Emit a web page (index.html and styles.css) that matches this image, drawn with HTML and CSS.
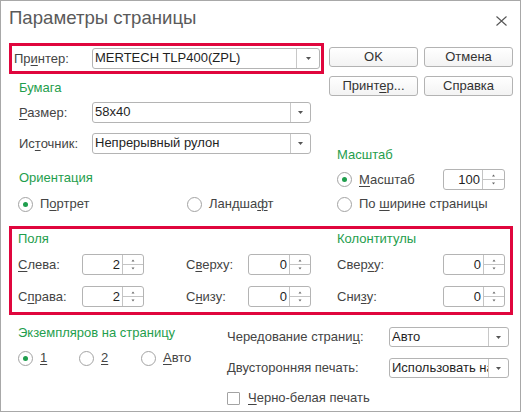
FILE: index.html
```html
<!DOCTYPE html>
<html lang="ru">
<head>
<meta charset="utf-8">
<title>Параметры страницы</title>
<link rel="stylesheet" href="styles.css">
</head>
<body>
<div class="window">
  <div class="titlebar">
    <div class="title">Параметры страницы</div>
    <svg class="close" width="11" height="10" viewBox="0 0 11 10"><path d="M0.5 0.5 L10.5 9.5 M10.5 0.5 L0.5 9.5" stroke="#555" stroke-width="1.1" fill="none"/></svg>
  </div>

  <div class="top">
    <div class="left">
      <div class="hl printer-box">
        <div class="field-row">
          <span class="label w-printer-label">Пр<u>и</u>нтер:</span>
          <div class="combo w-printer"><span class="combo-text">MERTECH TLP400(ZPL)</span><span class="combo-btn"><svg width="5" height="3" viewBox="0 0 5 3"><path d="M0 0h5L2.5 3z" fill="#555"/></svg></span></div>
        </div>
      </div>
      <div class="group-title paper-title">Бумага</div>
      <div class="field-row size-row">
        <span class="label w-field-label"><u>Р</u>азмер:</span>
        <div class="combo w-paper"><span class="combo-text">58x40</span><span class="combo-btn narrow"><svg width="5" height="3" viewBox="0 0 5 3"><path d="M0 0h5L2.5 3z" fill="#555"/></svg></span></div>
      </div>
      <div class="field-row source-row">
        <span class="label w-field-label">Ис<u>т</u>очник:</span>
        <div class="combo w-paper"><span class="combo-text">Непрерывный рулон</span><span class="combo-btn narrow"><svg width="5" height="3" viewBox="0 0 5 3"><path d="M0 0h5L2.5 3z" fill="#555"/></svg></span></div>
      </div>
      <div class="group-title orient-title">Ориентация</div>
      <div class="orient-radios">
        <div class="radio-item"><span class="radio checked"></span><span class="label">П<u>о</u>ртрет</span></div>
        <div class="radio-item"><span class="radio"></span><span class="label">Ландша<u>ф</u>т</span></div>
      </div>
    </div>

    <div class="right">
      <div class="buttons">
        <div class="btn">OK</div>
        <div class="btn">Отмена</div>
        <div class="btn">Принт<u>е</u>р...</div>
        <div class="btn">Справка</div>
      </div>
      <div class="scale-group">
        <div class="group-title">Масштаб</div>
        <div class="scale-row">
          <div class="radio-item"><span class="radio checked"></span><span class="label"><u>М</u>асштаб</span></div>
          <div class="spin w-scale"><span class="spin-text">100</span><span class="spin-btn wide"><svg width="21" height="19" viewBox="0 0 21 19"><path d="M0 9.5H21" stroke="#c4c4c4" stroke-width="1"/><path d="M9 6.5h3L10.5 4.5z" fill="#666"/><path d="M9 12.5h3L10.5 14.5z" fill="#666"/></svg></span></div>
        </div>
        <div class="fit-row">
          <div class="radio-item"><span class="radio"></span><span class="label">По <u>ш</u>ирине страницы</span></div>
        </div>
      </div>
    </div>
  </div>

  <div class="hl margins-box">
    <div class="mgroup">
      <div class="group-title">Поля</div>
      <div class="mrow mrow-left first">
        <span class="label"><u>С</u>лева:</span>
        <div class="spin"><span class="spin-text">2</span><span class="spin-btn"><svg width="20" height="19" viewBox="0 0 20 19"><path d="M0 9.5H20" stroke="#c4c4c4" stroke-width="1"/><path d="M8.5 6.5h3L10 4.5z" fill="#666"/><path d="M8.5 12.5h3L10 14.5z" fill="#666"/></svg></span></div>
        <span></span>
        <span class="label">С<u>в</u>ерху:</span>
        <div class="spin"><span class="spin-text">0</span><span class="spin-btn"><svg width="20" height="19" viewBox="0 0 20 19"><path d="M0 9.5H20" stroke="#c4c4c4" stroke-width="1"/><path d="M8.5 6.5h3L10 4.5z" fill="#666"/><path d="M8.5 12.5h3L10 14.5z" fill="#666"/></svg></span></div>
      </div>
      <div class="mrow mrow-left second">
        <span class="label">С<u>п</u>рава:</span>
        <div class="spin"><span class="spin-text">2</span><span class="spin-btn"><svg width="20" height="19" viewBox="0 0 20 19"><path d="M0 9.5H20" stroke="#c4c4c4" stroke-width="1"/><path d="M8.5 6.5h3L10 4.5z" fill="#666"/><path d="M8.5 12.5h3L10 14.5z" fill="#666"/></svg></span></div>
        <span></span>
        <span class="label">С<u>н</u>изу:</span>
        <div class="spin"><span class="spin-text">0</span><span class="spin-btn"><svg width="20" height="19" viewBox="0 0 20 19"><path d="M0 9.5H20" stroke="#c4c4c4" stroke-width="1"/><path d="M8.5 6.5h3L10 4.5z" fill="#666"/><path d="M8.5 12.5h3L10 14.5z" fill="#666"/></svg></span></div>
      </div>
    </div>
    <div class="mgroup">
      <div class="group-title">Колонтитулы</div>
      <div class="mrow mrow-right first">
        <span class="label">Свер<u>х</u>у:</span>
        <div class="spin"><span class="spin-text">0</span><span class="spin-btn"><svg width="20" height="19" viewBox="0 0 20 19"><path d="M0 9.5H20" stroke="#c4c4c4" stroke-width="1"/><path d="M8.5 6.5h3L10 4.5z" fill="#666"/><path d="M8.5 12.5h3L10 14.5z" fill="#666"/></svg></span></div>
      </div>
      <div class="mrow mrow-right second">
        <span class="label">Сни<u>з</u>у:</span>
        <div class="spin"><span class="spin-text">0</span><span class="spin-btn"><svg width="20" height="19" viewBox="0 0 20 19"><path d="M0 9.5H20" stroke="#c4c4c4" stroke-width="1"/><path d="M8.5 6.5h3L10 4.5z" fill="#666"/><path d="M8.5 12.5h3L10 14.5z" fill="#666"/></svg></span></div>
      </div>
    </div>
  </div>

  <div class="bottom">
    <div class="bleft">
      <div class="group-title copies-title">Экземпляров на страницу</div>
      <div class="copies-radios">
        <div class="radio-item"><span class="radio checked"></span><span class="label"><u>1</u></span></div>
        <div class="radio-item"><span class="radio"></span><span class="label"><u>2</u></span></div>
        <div class="radio-item"><span class="radio"></span><span class="label"><u>А</u>вто</span></div>
      </div>
    </div>
    <div class="bright">
      <div class="field-row alt-row">
        <span class="label w-bottom-label">Чередование страни<u>ц</u>:</span>
        <div class="combo short w-bottom"><span class="combo-text">Авто</span><span class="combo-btn narrow"><svg width="5" height="3" viewBox="0 0 5 3"><path d="M0 0h5L2.5 3z" fill="#555"/></svg></span></div>
      </div>
      <div class="field-row duplex-row">
        <span class="label w-bottom-label">Двусторонняя печать:</span>
        <div class="combo short w-bottom"><span class="combo-text">Использовать настройки принтера</span><span class="combo-btn narrow"><svg width="5" height="3" viewBox="0 0 5 3"><path d="M0 0h5L2.5 3z" fill="#555"/></svg></span></div>
      </div>
      <div class="check-row">
        <span class="checkbox"></span><span class="label"><u>Ч</u>ерно-белая печать</span>
      </div>
    </div>
  </div>
</div>
</body>
</html>
```

FILE: styles.css
```css
html, body {
  margin: 0;
  padding: 0;
  background: #ffffff;
}

body {
  font-family: "Liberation Sans", Arial, sans-serif;
  font-size: 13px;
  color: #444444;
}

u {
  text-decoration: underline;
  text-underline-offset: 2px;
}

.window {
  box-sizing: border-box;
  width: 521px;
  height: 412px;
  border: 1px solid #a8a8a8;
  padding: 0 7px 0 8px;
  background: #ffffff;
}

.titlebar {
  display: flex;
  justify-content: space-between;
  align-items: flex-start;
  height: 42px;
}

.title {
  font-size: 18.6px;
  line-height: 22px;
  color: #5a5a5a;
  margin-top: 6px;
}

.close {
  display: block;
  margin-top: 15px;
  margin-right: 6px;
}

.label {
  line-height: 16px;
  white-space: nowrap;
}

.group-title {
  color: #1f9e4d;
  line-height: 16px;
  white-space: nowrap;
}

/* highlight boxes */
.hl {
  border: 3px solid #e0063d;
}

/* top area */
.top {
  display: grid;
  grid-template-columns: 315px 184px;
  column-gap: 5px;
}

.printer-box {
  padding: 2px 1px 2px 2px;
}

.field-row {
  display: flex;
  align-items: center;
}

.w-printer-label { width: 78px; }
.w-field-label { width: 73px; }
.w-printer { width: 228px; }
.w-paper { width: 219px; }

.combo {
  box-sizing: border-box;
  height: 21px;
  display: flex;
  border: 1px solid #b4b4b4;
  border-radius: 3px;
  background: #ffffff;
  overflow: hidden;
}

.combo.short { height: 20px; }

.combo-text {
  flex: 1;
  min-width: 0;
  padding-left: 2px;
  color: #1f1f1f;
  line-height: 18px;
  white-space: nowrap;
  overflow: hidden;
}

.combo-btn {
  width: 22px;
  flex: none;
  border-left: 1px solid #c8c8c8;
  display: flex;
  align-items: center;
  justify-content: center;
}

.combo-btn.narrow { width: 19px; }

.combo-btn svg { display: block; }

.paper-title {
  margin-top: 6px;
  padding-left: 10px;
}

.size-row {
  margin-top: 6px;
  padding-left: 10px;
}

.source-row {
  margin-top: 10px;
  padding-left: 10px;
}

.orient-title {
  margin-top: 16px;
  padding-left: 10px;
}

.orient-radios {
  margin-top: 10px;
  padding-left: 9px;
  display: grid;
  grid-template-columns: 169px auto;
}

.radio-item {
  display: flex;
  align-items: center;
  height: 16px;
}

.radio {
  box-sizing: border-box;
  width: 15px;
  height: 15px;
  flex: none;
  border: 1px solid #a3a3a3;
  border-radius: 50%;
  background: #ffffff;
  margin-right: 7px;
  display: flex;
  align-items: center;
  justify-content: center;
}

.radio.checked::after {
  content: "";
  width: 5px;
  height: 5px;
  border-radius: 50%;
  background: #1f9e4d;
}

/* right column */
.buttons {
  display: grid;
  grid-template-columns: 89px 89px;
  column-gap: 6px;
  row-gap: 9px;
  margin-top: 4px;
}

.btn {
  box-sizing: border-box;
  height: 20px;
  border: 1px solid #b3b3b3;
  border-radius: 3px;
  background: linear-gradient(#ffffff, #f3f3f3);
  color: #333333;
  text-align: center;
  line-height: 18px;
  white-space: nowrap;
}

.scale-group {
  margin-top: 51px;
  padding-left: 8px;
  padding-right: 8px;
}

.scale-row {
  margin-top: 6px;
  height: 21px;
  display: flex;
  align-items: center;
  justify-content: space-between;
}

.fit-row {
  margin-top: 6px;
}

/* spinners */
.spin {
  box-sizing: border-box;
  height: 21px;
  display: flex;
  border: 1px solid #b4b4b4;
  border-radius: 3px;
  background: #ffffff;
}

.spin-text {
  flex: 1;
  text-align: right;
  padding-right: 2px;
  color: #1f1f1f;
  line-height: 19px;
}

.spin-btn {
  width: 20px;
  flex: none;
  border-left: 1px solid #c4c4c4;
}

.spin-btn.wide { width: 21px; }

.spin-btn svg { display: block; }

.w-scale { width: 62px; }

/* margins box */
.margins-box {
  margin-top: 14px;
  padding: 2px 5px 5px 6px;
  display: grid;
  grid-template-columns: 293px 168px;
  column-gap: 26px;
}

.mrow {
  display: grid;
  align-items: center;
  height: 21px;
}

.mrow.first { margin-top: 7px; }
.mrow.second { margin-top: 11px; }

.mrow-left {
  grid-template-columns: 64px 62px 42px 62px 63px;
}

.mrow-right {
  grid-template-columns: 106px 62px;
}

/* bottom */
.bottom {
  display: grid;
  grid-template-columns: 218px auto;
}

.copies-title {
  margin-top: 10px;
  padding-left: 9px;
}

.copies-radios {
  margin-top: 9px;
  padding-left: 9px;
  display: grid;
  grid-template-columns: 61px 62px auto;
}

.alt-row { margin-top: 12px; }
.duplex-row { margin-top: 11px; }

.w-bottom-label { width: 162px; }
.w-bottom { width: 120px; }

.check-row {
  margin-top: 12px;
  height: 16px;
  display: flex;
  align-items: center;
}

.checkbox {
  box-sizing: border-box;
  width: 13px;
  height: 13px;
  border: 1px solid #a3a3a3;
  border-radius: 1px;
  background: #ffffff;
  margin-right: 8px;
}
```
